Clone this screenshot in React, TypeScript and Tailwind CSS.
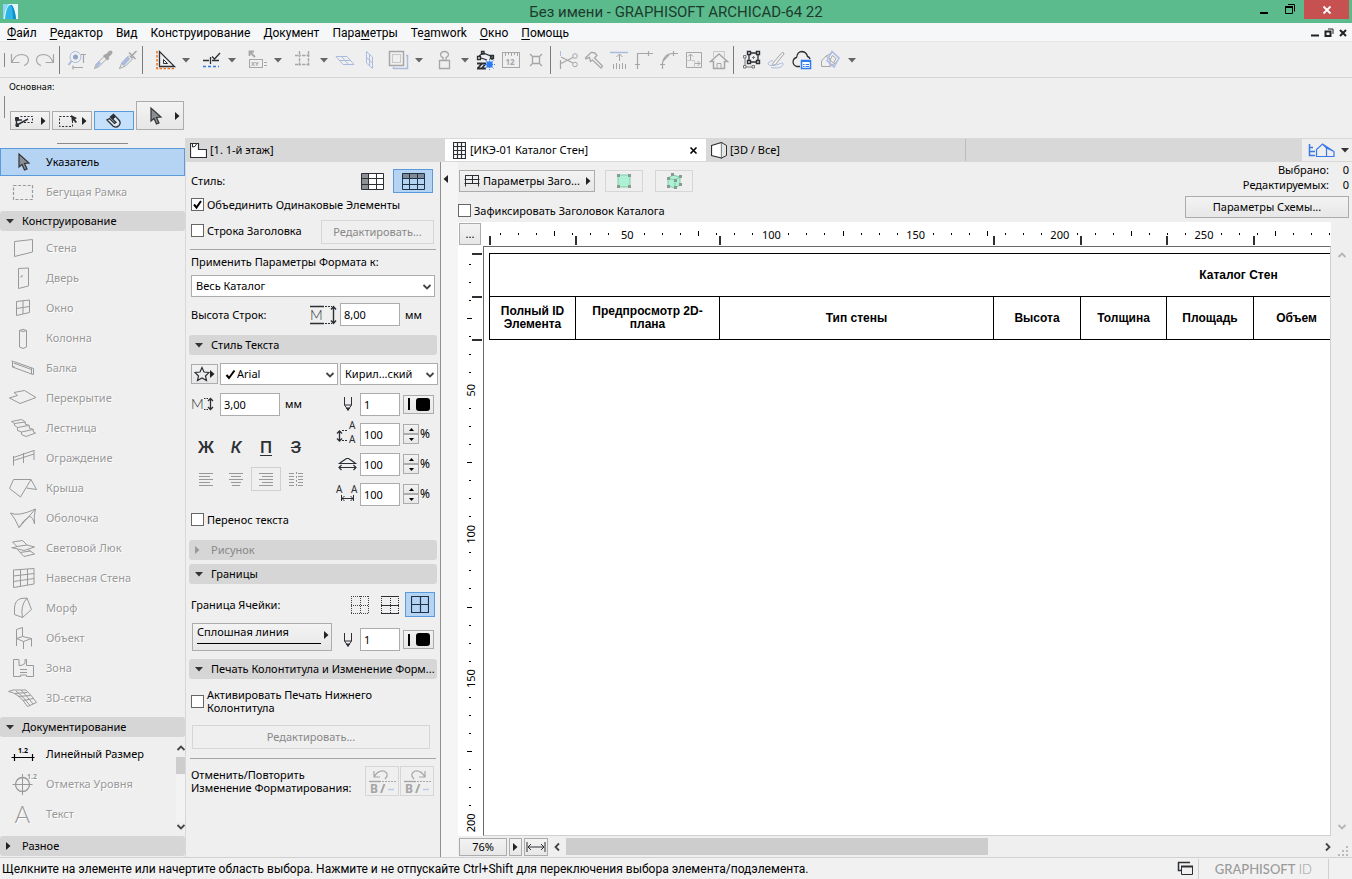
import React, { useEffect, useRef, useState } from 'react';

interface IconProps {
  w?: number;
  h?: number;
  className?: string;
  children: React.ReactNode;
}

const Icon: React.FC<IconProps> = ({ w = 24, h = 24, className = '', children }) => (
  <svg width={w} height={h} viewBox={`0 0 ${w} ${h}`} fill="none" stroke="currentColor" className={`shrink-0 ${className}`} aria-hidden="true">
    {children}
  </svg>
);

const Down = ({ className = 'text-[#555]' }: { className?: string }) => (
  <Icon w={8} h={5} className={className}><path d="M0 0H8L4 4.5Z" fill="currentColor" stroke="none" /></Icon>
);

const Right = ({ className = 'text-[#222]' }: { className?: string }) => (
  <Icon w={5} h={8} className={className}><path d="M0 0V8L4.5 4Z" fill="currentColor" stroke="none" /></Icon>
);

const Chevron = ({ d, className = 'text-[#444]' }: { d: string; className?: string }) => (
  <Icon w={10} h={10} className={className}><path d={d} strokeWidth={1.8} /></Icon>
);

const CHEVRON = {
  up: 'M1.5 7L5 3.5L8.5 7',
  down: 'M1.5 3L5 6.5L8.5 3',
  left: 'M7 1.5L3.5 5L7 8.5',
  right: 'M3 1.5L6.5 5L3 8.5',
};

const Cursor = () => (
  <Icon w={14} h={20} className="text-[#333]">
    <path d="M2 2V15L5 12.5L7.5 18L10 17L7.5 11.5L12 11Z" fill="#8a8f96" strokeWidth={1.2} />
  </Icon>
);

/* ---------- Menu ---------- */

const menu: [string, string, string][] = [
  ['', 'Ф', 'айл'],
  ['', 'Р', 'едактор'],
  ['Вид', '', ''],
  ['Конструирование', '', ''],
  ['Документ', '', ''],
  ['Пара', 'м', 'етры'],
  ['Te', 'a', 'mwork'],
  ['', 'О', 'кно'],
  ['', 'П', 'омощь'],
];

const TitleBar = () => (
  <header className="relative flex h-[23px] shrink-0 items-center justify-center bg-[#5bbb8d] font-['Roboto','Noto_Sans',sans-serif] text-[#1d3b2d]">
    <svg width={15} height={15} viewBox="0 0 15 15" className="absolute left-[3px] top-1" aria-hidden="true">
      <rect width={15} height={15} fill="#e9f7fc" />
      <path d="M0 15V0H6Q2 4 1 15Z" fill="#8bd6f0" />
      <path d="M2 15Q3 4 6 1.500Q8 0 9.500 2Q12 6 13 15Z" fill="#2fb4e6" />
      <path d="M8 1Q9 1 9.500 2Q12 6 13 15H10Q10 6 8 1Z" fill="#0d8fc9" />
    </svg>
    <h1 className="text-[15px] leading-5">Без имени - GRAPHISOFT ARCHICAD-64 22</h1>
    <div className="absolute right-[3px] top-0 flex items-start">
      <button aria-label="Свернуть" className="flex h-[22px] w-[26px] items-center justify-center text-black">
        <Icon w={10} h={10}><path d="M1 7H9" strokeWidth={2} /></Icon>
      </button>
      <button aria-label="Развернуть" className="mr-px flex h-[18px] w-[26px] items-center justify-center text-black">
        <Icon w={12} h={12}><path d="M1.5 4.5H8.5V10.5H1.5Z" /><path d="M1 4H9" strokeWidth={2} /><path d="M4 1.5H10.5V8.5" /></Icon>
      </button>
      <button aria-label="Закрыть" className="flex h-[19px] w-[45px] items-center justify-center bg-[#c75050] text-white">
        <Icon w={10} h={10}><path d="M1.5 1.5L8.5 8.5M8.5 1.5L1.5 8.5" strokeWidth={1.8} /></Icon>
      </button>
    </div>
  </header>
);

const MenuBar = () => (
  <nav className="flex h-[19px] shrink-0 items-center border-b border-[#e4e4e4] bg-[#f6f7f9] pl-[7px] pt-0.5 font-['Roboto','Noto_Sans',sans-serif] text-[12px] leading-4 text-black">
    <div className="flex grow gap-[13px]">
      {menu.map(([a, u, b]) => (
        <a key={a + u + b} href="#" className="whitespace-nowrap">
          {a}<span className="underline underline-offset-2">{u}</span>{b}
        </a>
      ))}
    </div>
    <div className="flex items-center gap-1 pr-1 text-[#222]">
      <button aria-label="Свернуть окно"><Icon w={10} h={10}><path d="M1 7.5H9" strokeWidth={2} /></Icon></button>
      <button aria-label="Развернуть окно"><Icon w={10} h={10}><path d="M1.500 3.500H6.500V8H1.500Z" strokeWidth={2} /><path d="M4 1H9V6" /></Icon></button>
      <button aria-label="Закрыть окно"><Icon w={10} h={10}><path d="M2 2L8 8M8 2L2 8" strokeWidth={2} /></Icon></button>
    </div>
  </nav>
);

/* ---------- Toolbar ---------- */

const G = 'text-[#a6a6a6]';
const D = 'text-[#2c3035]';

interface ToolItem {
  kind: 'icon' | 'arrow' | 'sep';
  name?: string;
  cls?: string;
  art?: React.ReactNode;
}

const arrow: ToolItem = { kind: 'arrow' };

const toolbar: ToolItem[] = [
  { kind: 'icon', name: 'Отменить', cls: G, art: <path d="M3.500 6V14.500H11.500M4 14C6 9 10 6.500 13.500 6.500Q20.500 7 20.500 12Q20 16.500 16 17.500" strokeWidth={1.200} /> },
  { kind: 'icon', name: 'Повторить', cls: G, art: <path d="M20.500 6V14.500H12.500M20 14C18 9 14 6.500 10.500 6.500Q3.500 7 3.500 12Q4 16.500 8 17.500" strokeWidth={1.200} /> },
  { kind: 'sep', cls: 'mr-[5px]' },
  { kind: 'icon', name: 'Найти и выбрать', cls: G, art: <><circle cx={9.500} cy={9} r={5.500} stroke="#a9bcdf" /><circle cx={9.500} cy={9} r={2.500} fill="#8fa3c4" stroke="none" /><path d="M5.500 13L2.500 17" stroke="#a9bcdf" strokeWidth={2} /><path d="M15 6.500H20M17.500 6.500V15M7 19.500H17M7 17.500V21.500" strokeWidth={1.200} /></> },
  { kind: 'icon', name: 'Взять параметры', cls: G, art: <><path d="M13 7L17.500 11.500" strokeWidth={3} /><path d="M16 8L19.500 4.500" strokeWidth={4} strokeLinecap="round" /><path d="M13 8.500L5 16.500L3.500 20.500L7.500 19L15.500 11" /><path d="M9 14L5 18.500" stroke="#a9bcdf" strokeWidth={3} /></> },
  { kind: 'icon', name: 'Передать параметры', cls: G, art: <><path d="M13 4.500L19.500 11M16.500 7L20.500 3M14 8L16.500 10.500" strokeWidth={1.600} /><path d="M13 7.500L6 14.500L3.500 20.500L9.500 18L16.500 11" /><path d="M13 9.500L6.500 17" stroke="#a9bcdf" strokeWidth={3.500} /></> },
  { kind: 'sep', cls: 'mr-[10px]' },
  { kind: 'icon', name: 'Линейки', cls: D, art: <><path d="M5.500 3.500V18.500H20.500Z" strokeWidth={1.300} /><path d="M9.500 11.500V15.500H13.500Z" /><path d="M3 3V20.500H21" stroke="#e8741e" strokeDasharray="2.500 1.500" strokeWidth={1.500} /></> },
  arrow,
  { kind: 'icon', name: 'Направляющие', cls: `ml-[5px] ${D}`, art: <><path d="M3 12.500H9M10.500 9V16M12 12.500H19M12 8.500L14.500 11L20 5" strokeWidth={1.300} /><path d="M3 18.500H19" stroke="#3b78e7" strokeDasharray="3 2" strokeWidth={1.600} /></> },
  arrow,
  { kind: 'icon', name: 'Координаты', cls: `ml-[5px] ${G}`, art: <><path d="M9 9L3.500 3.500M3.500 8V3.500H8" strokeWidth={1.800} /><rect x={3.500} y={11.500} width={13} height={8} /><text x={5} y={18} fontSize={6} fontWeight={700} fill="currentColor" stroke="none">XY</text><path d="M18 14.500H21M18 17.500H21" /></> },
  arrow,
  { kind: 'icon', name: 'Сетка', cls: `ml-[5px] ${G}`, art: <path d="M3 7.500H21M3 16.500H21M7.500 3V21M16.500 3V21" strokeDasharray="3.500 1 1.500 1 3.500 1 3" strokeWidth={1.400} /> },
  arrow,
  { kind: 'icon', name: 'Плоскость', cls: 'text-[#a9bcdf]', art: <path d="M3 8.500H14L21 16.500H10ZM6.500 12.500H17.500M8.500 8.500L15.500 16.500" /> },
  { kind: 'icon', name: 'Вертикальная плоскость', cls: 'text-[#a9bcdf]', art: <path d="M8.500 3.500L14.500 9V20.500L8.500 15ZM11.500 6V18M8.500 9.500L14.500 15" /> },
  { kind: 'icon', name: 'Слои', cls: `ml-1 ${G}`, art: <><path d="M19 7.500H20.500V20.500H6.500V19" stroke="#a9bcdf" strokeWidth={1.500} /><rect x={2.500} y={3.500} width={14} height={14} strokeWidth={1.500} /><rect x={5.500} y={6.500} width={8} height={8} stroke="#c8c8c8" /></> },
  arrow,
  { kind: 'icon', name: 'Штамп', cls: `ml-[5px] ${G}`, art: <path d="M6.500 12.500H16.500V20.500H6.500ZM10 12.500V9.500Q7.500 8.500 7.500 6.500Q8 3.500 11.500 3.500Q15 3.500 15.500 6.500Q15.500 8.500 13 9.500V12.500" strokeWidth={1.300} /> },
  arrow,
  { kind: 'icon', name: 'Трассировка', cls: D, art: <><path d="M5 8L9 5L18 8.500V12" strokeWidth={1.300} /><path d="M3.500 8.500H6.500V11.500H3.500ZM7.500 3.500H10V6H7.500ZM16.500 7.500H19.500V10.500H16.500ZM7 10L13 12" strokeWidth={1.300} /><path d="M3 15.500H12M3 20.500H12M4 20L8 15.500M8 20L12 15.500" strokeWidth={1.800} /><path d="M11.500 12.500L19.500 20.500M19.500 12.500L11.500 20.500M15.500 11V22M10 16.500H21" stroke="#2f7bf0" strokeDasharray="1.500 1" /><rect x={12.500} y={13.500} width={6} height={6} fill="#2f7bf0" stroke="none" /></> },
  { kind: 'icon', name: 'Измерить', cls: G, art: <><rect x={3.500} y={4.500} width={17} height={15} /><path d="M6.500 4.500V8M9.500 4.500V7M12.500 4.500V8M15.500 4.500V7M18.500 4.500V8" /><text x={6.500} y={17} fontSize={8} fontWeight={700} fill="currentColor" stroke="none">12</text></> },
  { kind: 'icon', name: 'Разрыв', cls: G, art: <path d="M8.500 8.500H15.500V15.500H8.500ZM6 6L9 9M18 6L15 9M6 18L9 15M18 18L15 15" strokeWidth={1.300} /> },
  { kind: 'sep', cls: 'mr-[5px]' },
  { kind: 'icon', name: 'Отсечь', cls: G, art: <><path d="M3.500 3V8" stroke="#a9bcdf" /><path d="M3.500 12V21M4 9L16 15M4 15.500L16 9.500" strokeWidth={1.200} /><circle cx={18} cy={8} r={2.300} /><circle cx={18} cy={16.500} r={2.300} /></> },
  { kind: 'icon', name: 'Расщепить', cls: G, art: <path d="M3.500 10L9 4.500Q13 4 15 7.500L12.500 10L20.500 18L19 20L10.500 12L8.500 13.500L7.500 9.500L4 11Z" strokeWidth={1.300} /> },
  { kind: 'icon', name: 'Подогнать', cls: G, art: <><path d="M3 4.500H21" stroke="#a9bcdf" strokeWidth={1.500} /><path d="M12.500 6V13M9.500 9L12.500 6L15.500 9M6.500 16V21M9.500 15V21M12.500 16V21M15.500 15V21M18.500 16V21" /></> },
  { kind: 'icon', name: 'Пересечь', cls: G, art: <path d="M5.500 21V5.500H21M3 16.500H8M16.500 3V8" strokeWidth={1.200} /> },
  { kind: 'icon', name: 'Сопряжение', cls: G, art: <path d="M5.500 21V15Q7 6 15 5.500H21M3 16.500H8M16.500 3V8M6 13L12 7" strokeWidth={1.200} /> },
  { kind: 'icon', name: 'Изменить размер', cls: G, art: <><path d="M4.500 4.500H19.500V19.500H4.500ZM8.500 12V6M6 8.500L8.500 6L11 8.500M12 15.500H18M15.500 13L18 15.500L15.500 18" /><path d="M4.500 12.500H12.500V19.500" stroke="#c8c8c8" /></> },
  { kind: 'icon', name: 'Домой', cls: G, art: <><path d="M3.500 13.500L12 6L20.500 13.500H17.500V20.500H6.500V13.500Z" strokeWidth={1.500} /><path d="M10 20V15.500H14V20" /><path d="M6.500 9V3.500H17.500V9" stroke="#c8c8c8" /></> },
  { kind: 'sep', cls: 'mr-[5px]' },
  { kind: 'icon', name: 'Группировать', cls: D, art: <><path d="M9 5H18V14H9Z" strokeWidth={1.300} /><path d="M7.500 3.500H10.500V6.500H7.500ZM16.500 3.500H19.500V6.500H16.500ZM7.500 12.500H10.500V15.500H7.500ZM16.500 12.500H19.500V15.500H16.500Z" fill="#efefef" strokeWidth={1.400} /><path d="M5 10V17M6 19H12M3.500 7.500H6V10H3.500ZM3.500 17.500H6V20H3.500ZM12 17.500H14.500V20H12ZM13.500 8V11M12 9.500H15" stroke="#777" /></> },
  { kind: 'icon', name: 'Редактировать', cls: G, art: <><path d="M8 15L17 4.500Q19 4 19 6L10.500 16.500L7.500 17.500Z" /><path d="M8 12.500C1 14 2 18 8 17.500S19 13 18 16.500S11 20.500 6 19.500" stroke="#a9bcdf" /></> },
  { kind: 'icon', name: 'BIMcloud', cls: D, art: <><path d="M10 18.500H7Q3.500 18 3 14Q3.500 10 6.500 9.500Q7.500 3.500 12 3.500Q16.500 4 17.500 8.500Q19.500 9 20 11" strokeWidth={1.300} /><rect x={11.500} y={12.500} width={9} height={8} fill="#fff" stroke="#2f7bf0" strokeWidth={1.500} /><path d="M11 13.500H21M13 16.500H14.500M15.500 16.500H19M13 18.500H14.500M15.500 18.500H19" stroke="#2f7bf0" /></> },
  { kind: 'icon', name: '3D-вид', cls: `ml-[3px] ${G}`, art: <><path d="M3.500 13L8 8L12 11V18.500H3.500ZM8 8L14 5M12 18.500L19 14" /><path d="M14 3.500L21 10L16 19L9 12.500Z" stroke="#a9b9ea" strokeWidth={1.500} /><path d="M14.500 7.500L18 10.500L15.500 15L12 12Z" /></> },
  { kind: 'arrow', cls: 'ml-0.5' },
];

const Toolbar = () => (
  <div className="flex h-9 shrink-0 items-center border-b border-[#d4d4d4] pl-1 pt-px" role="toolbar">
    <span className="mr-0.5 h-[14px] w-px bg-[#888]" />
    {toolbar.map((t, i) => {
      if (t.kind === 'sep') return <span key={i} className={`ml-0.5 h-7 w-px bg-[#7c7c7c] ${t.cls}`} />;
      if (t.kind === 'arrow') return <button key={i} aria-label="Ещё" className={`flex h-6 w-4 items-center justify-center ${t.cls ?? ''}`}><Down className="text-[#666]" /></button>;
      return (
        <button key={i} aria-label={t.name} className={`flex h-6 w-[25px] items-center justify-end ${t.cls}`}>
          <Icon>{t.art}</Icon>
        </button>
      );
    })}
  </div>
);

const boxBtn = 'flex items-center justify-center border border-[#acacac] bg-linear-to-b from-[#f3f3f3] to-[#e7e7e7]';

const InfoBox = () => (
  <div className="flex h-[60px] shrink-0 flex-col pl-1">
    <p className="mt-[3px] pl-[5px] text-[9px] leading-3 text-black">Основная:</p>
    <div className="mt-[3px] flex items-end gap-0.5">
      <span className="mb-3 mr-[3px] h-[22px] w-px bg-[#888]" />
      <button aria-label="Способ выбора" className={`${boxBtn} h-[19px] w-10 gap-2`}>
        <Icon w={18} h={14} className="text-[#2c3035]"><path d="M5.500 2.500H17.500V8.500H7" strokeDasharray="2 1.500" /><path d="M1.500 4.500V12M2 11L13 5M3 6H7" strokeWidth={1.500} /><path d="M.5 3.500H3.500V6.500H.5ZM1 10H3.500V12.500H1Z" fill="currentColor" /></Icon>
        <Right />
      </button>
      <button aria-label="Рамка выбора" className={`${boxBtn} h-[19px] w-10 gap-1`}>
        <Icon w={20} h={14} className="text-[#2c3035]"><path d="M1.500 2.500H14.500V12.500H1.500Z" strokeDasharray="2 1.500" /><path d="M13 1L19 4L17 5.500L19 8L17.500 9L15.500 6.500L14 8Z" fill="currentColor" stroke="none" /></Icon>
        <Right />
      </button>
      <button aria-label="Магнит" className="flex h-[19px] w-10 items-center justify-center border border-[#5a9bdc] bg-[#c4e0fa]">
        <Icon w={18} h={16} className="text-[#2c3035]"><path d="M2 7L8 13Q11 15.500 14 12.500Q16.500 9.500 13.500 6.500L8.500 1.500L5.500 4L11 9.500L9.500 10.500L4.500 5.500Z" fill="#dfe9f2" strokeWidth={1.300} /><path d="M8.500 1.500L5.500 4L8 6L10.500 3.500Z" fill="currentColor" /></Icon>
      </button>
      <button aria-label="Указатель" className={`${boxBtn} h-[29px] w-12 gap-3 pl-2`}>
        <Cursor />
        <Right />
      </button>
    </div>
  </div>
);

/* ---------- Toolbox ---------- */

const design: [string, React.ReactNode][] = [
  ['Стена', <path d="M5.500 5.500L23.500 3.500V16L5.500 20.500Z" />],
  ['Дверь', <path d="M9.500 2.500L19.500 2V20L9.500 22.500ZM12 11.500V10H14" />],
  ['Окно', <path d="M7.500 5.500L20.500 4V16.500L7.500 19.500ZM14 4.500V18M7.500 12.500L20.500 10.500" />],
  ['Колонна', <path d="M10.500 4.500V21Q14 24 17.500 21V4.500Q14 2 10.500 4.500Q14 6.500 17.500 4.500" />],
  ['Балка', <path d="M2.500 5L4.500 5.500L24.500 12.500V18.500L22.500 18L3.500 11V5.500M22.500 12V18M3.500 11L5.500 10.500M4.500 7L22.500 13.500" />],
  ['Перекрытие', <path d="M.5 12L8.500 9.500L5 6.500L15.500 4.500L27 11.500L11 17.500Z" />],
  ['Лестница', <path d="M2.500 5.500L12.500 3.500L16.500 6L16 8L20.500 9.500L20 12L24.500 13.500L24 15.500L26.500 17L17 20.500L12.500 18.500V16L8.500 14.500V11.500L5.500 9.500V7.500ZM5.500 7.500L16 6M8.500 11.500L19.500 9.500M12.500 16L24 13.500" />],
  ['Ограждение', <path d="M4.500 10V19.500M14.500 7V17M25 4V14M4.500 11.500L25 4.500M4.500 14.500L25 8" />],
  ['Крыша', <path d="M.5 12.500L4.500 3.500H22L11.500 21ZM22 3.500L27.500 13.500L17.500 12" />],
  ['Оболочка', <path d="M1.500 7Q9 11 26.500 3Q24.500 10 25.500 18Q24 11 20.500 10.500Q14 14 10 21.500Q6 12 1.500 7ZM26.500 3L10 21.500" />],
  ['Световой Люк', <path d="M3.500 6L13.500 4.500L18 9L8 10.500ZM3.500 12L8 10.500M18 9L25.500 11L15 14.500L2.500 11.500M8.500 13.500L15 20.500L25.500 18L19 13.500M11 16.500L21.500 15" />],
  ['Навесная Стена', <path d="M4.500 4L25 2.500V18L4.500 21.500ZM11.500 3.500V20.500M18.500 3V19M4.500 10L25 7.500M4.500 15.500L25 12.500" />],
  ['Морф', <path d="M5.500 12Q6 4 12 2.500L18 2L22.500 13.500L13.500 21.500L5.500 18.500ZM18 2Q11 10 13.500 21.500" />],
  ['Объект', <path d="M7.500 20V3.500L13.500 1.500V10.500L7.500 12.500L14.500 15.500L22.500 12.500V20.500M13.500 10.500L22.500 12.500M14.500 15.500V23" />],
  ['Зона', <path d="M9.500 3.500H4.500V20.500H11.500V19H17.500V20.500H24.500V9.500H17.500V3.500H16V7.500L12 9.500H10V3.500ZM11 13.500H18M11 16.500H18" />],
  ['3D-сетка', <path d="M-.5 5.500L4 4H17Q23 10 27.500 16.500L18.500 20.500Q10 7 -.5 5.500ZM7 5Q14 10 21 19.500M12 4Q18 10 24 18M5 7.500L18 6.500M9 10.500L21.500 9.500M14 14.500L24.500 12.500" />],
];

const doc: [string, React.ReactNode, boolean][] = [
  ['Линейный Размер', <><path d="M2.500 15.500H25.500M5.500 12V19M23.500 12V19" strokeWidth={1.200} /><text x={9} y={11} fontSize={7} fontWeight={700} fill="currentColor" stroke="none">1.2</text></>, true],
  ['Отметка Уровня', <><circle cx={13.500} cy={12.500} r={7} strokeWidth={1.300} /><path d="M3.500 12.500H23.500M13.500 2V23" /><text x={18} y={7} fontSize={7} fontWeight={700} fill="currentColor" stroke="none">1.2</text></>, false],
  ['Текст', <text x={5.500} y={21} fontSize={24} fontWeight={300} fontFamily="Lato, sans-serif" fill="currentColor" stroke="none">A</text>, false],
];

const ToolRow = ({ label, art, active = false }: { label: string; art: React.ReactNode; active?: boolean }) => (
  <button className={`flex h-[30px] w-full items-center gap-[9px] pl-[9px] text-left ${active ? 'text-black' : 'text-[#999] text-shadow-[1px_1px_0_#fff]'}`}>
    <Icon w={28} className="overflow-visible">{art}</Icon>
    <span>{label}</span>
  </button>
);

const ToolHeader = ({ label, open = true }: { label: string; open?: boolean }) => (
  <button className="flex h-5 w-full shrink-0 items-center rounded-[3px] bg-[#d6d6d6] pl-[6px] text-left text-black">
    <span className="flex w-4 shrink-0">{open ? <Down className="text-[#333]" /> : <Right />}</span>
    <span>{label}</span>
  </button>
);

const Toolbox = () => (
  <aside className="flex w-[186px] shrink-0 flex-col overflow-hidden border-r border-[#d8d8d8] pb-px">
    <span className="mx-auto mb-1 mt-[5px] h-px w-[71px] shrink-0 bg-[#8a8a8a]" />
    <button className="flex h-7 shrink-0 items-center gap-[15px] border border-[#5a9bdc] bg-[#b5d4f4] pl-4 text-left text-black">
      <Cursor />
      <span>Указатель</span>
    </button>
    <div className="mb-1 mt-px">
      <ToolRow label="Бегущая Рамка" art={<path d="M4.500 5.500H23.500V19.500H4.500Z" strokeDasharray="3 1.700" strokeWidth={1.200} />} />
    </div>
    <ToolHeader label="Конструирование" />
    <div className="mb-1 mt-0.5">
      {design.map(([label, art]) => <ToolRow key={label} label={label} art={art} />)}
    </div>
    <ToolHeader label="Документирование" />
    <div className="mt-0.5 flex min-h-0 grow">
      <div className="grow">
        {doc.map(([label, art, active]) => <ToolRow key={label} label={label} art={art} active={active} />)}
      </div>
      <div className="mb-1 flex w-[9px] shrink-0 flex-col items-center overflow-hidden pt-1">
        <Chevron d={CHEVRON.up} />
        <span className="mt-1 h-[17px] w-full bg-[#cdcdcd]" />
        <span className="w-full grow bg-[#f3f3f3]" />
        <Chevron d={CHEVRON.down} />
      </div>
    </div>
    <ToolHeader label="Разное" open={false} />
  </aside>
);

/* ---------- Format panel ---------- */

const Check = ({ label, checked = false }: { label: React.ReactNode; checked?: boolean }) => {
  const [on, setOn] = useState(checked);
  return (
    <label className="flex items-center gap-[3px] leading-[13px]">
      <span className="relative flex shrink-0">
        <input type="checkbox" checked={on} onChange={() => setOn(!on)} className="h-[13px] w-[13px] appearance-none border border-[#666] bg-white" />
        {on && <Icon w={13} h={13} className="pointer-events-none absolute inset-0 text-black"><path d="M3 6.500L5.500 9.500L10 3" strokeWidth={2} /></Icon>}
      </span>
      <span>{label}</span>
    </label>
  );
};

const Section = ({ label, open = true, disabled = false }: { label: string; open?: boolean; disabled?: boolean }) => (
  <button disabled={disabled} className={`mx-[3px] flex h-5 shrink-0 items-center whitespace-nowrap rounded-[3px] bg-[#d6d6d6] pl-[6px] text-left ${disabled ? 'text-[#888]' : 'text-black'}`}>
    <span className="flex w-4 shrink-0">{open ? <Down className="text-[#333]" /> : <Right className="text-[#999]" />}</span>
    <span>{label}</span>
  </button>
);

const Select = ({ label, value, className, pad = 'pl-1' }: { label: string; value: string; className: string; pad?: string }) => (
  <div className={`relative flex ${className}`}>
    <select aria-label={label} className={`h-[22px] w-full appearance-none border border-[#acacac] bg-white ${pad}`}>
      <option>{value}</option>
    </select>
    <Chevron d={CHEVRON.down} className="pointer-events-none absolute right-[3px] top-[7px] text-[#444]" />
  </div>
);

const Field = ({ label, value, className }: { label: string; value: string; className: string }) => (
  <input type="text" aria-label={label} defaultValue={value} className={`h-[23px] shrink-0 border border-[#acacac] bg-white pl-[3px] ${className}`} />
);

const Pen = () => (
  <Icon w={10} h={16} className="mr-[7px] text-[#2c3035]"><path d="M1.500 1V9L5 14L8.500 9V1M1.500 9H8.500" /><path d="M5 14.500L3.500 12H6.500Z" fill="currentColor" /></Icon>
);

const PenColor = () => (
  <button aria-label="Цвет пера" className={`${boxBtn} ml-[3px] h-[19px] w-[31px] gap-[6px]`}>
    <span className="h-3 w-0.5 bg-black" />
    <span className="h-[13px] w-[14px] rounded-[3px] bg-black" />
  </button>
);

const Percent = ({ label, art }: { label: string; art: React.ReactNode }) => (
  <div className="flex h-[30px] items-center">
    <Icon w={22} h={20} className="mr-0.5 overflow-visible text-[#2c3035]">{art}</Icon>
    <Field label={label} value="100" className="w-10" />
    <span className="ml-[3px] flex w-4 flex-col">
      <button aria-label="Больше" className={`${boxBtn} h-[10px]`}><Icon w={5} h={3}><path d="M0 3H5L2.500 0Z" fill="#000" stroke="none" /></Icon></button>
      <button aria-label="Меньше" className={`${boxBtn} h-[10px]`}><Icon w={5} h={3}><path d="M0 0H5L2.500 3Z" fill="#000" stroke="none" /></Icon></button>
    </span>
    <span className="ml-px text-[12px]">%</span>
  </div>
);

const glyphA = (x: number, y: number) => (
  <text x={x} y={y} fontSize={10} fill="currentColor" stroke="none">A</text>
);

const glyphM = (
  <text x={0} y={15} fontSize={14} fontWeight={300} fontFamily="Lato, sans-serif" fill="currentColor" stroke="none">M</text>
);

const styleBtn = "flex h-8 w-[30px] items-center justify-center font-['Roboto','Noto_Sans',sans-serif] text-[17px] font-medium text-[#2c3035]";
const alignBtn = 'flex h-6 w-[30px] items-center justify-center text-[#999]';
const disabledBtn = 'flex items-center justify-center border border-[#d6d6d6] text-[#888]';
const line = 'mx-1 h-px shrink-0 bg-[#a5a5a5]';

const FormatPanel = () => (
  <section className="flex w-[255px] shrink-0 flex-col overflow-hidden border-r border-[#8f8f8f] text-black">
    <div className="ml-[5px] mr-[7px] mt-[7px] flex items-center">
      <span className="grow">Стиль:</span>
      <button aria-label="Вертикальный" className="mr-[9px]">
        <Icon w={23} h={17} className="text-[#2c3035]"><path d="M1 1H8V16H1Z" fill="#8d9196" stroke="none" /><path d="M8 1H22V16H8Z" fill="#fff" stroke="none" /><path d="M.5 .5H22.500V16.500H.5ZM.5 5.500H22.500M.5 11.500H22.500M7.500 .5V16.500M15.500 .5V16.500" /></Icon>
      </button>
      <button aria-label="Горизонтальный" className="flex h-6 w-10 items-center justify-center border border-[#5a9bdc] bg-[#b5d4f4]">
        <Icon w={23} h={17} className="text-[#1f3348]"><path d="M1 1H22V5H1Z" fill="#7f8a96" stroke="none" /><path d="M.5 .5H22.500V16.500H.5ZM.5 5.500H22.500M.5 11.500H22.500M7.500 .5V16.500M15.500 .5V16.500" /></Icon>
      </button>
    </div>
    <div className="ml-[5px] mt-[5px]"><Check label="Объединить Одинаковые Элементы" checked /></div>
    <div className="ml-[5px] mr-[6px] mt-[9px] flex items-start justify-between">
      <div className="mt-1"><Check label="Строка Заголовка" /></div>
      <button disabled className={`${disabledBtn} h-6 w-[113px]`}>Редактировать...</button>
    </div>
    <div className={`${line} mt-[5px]`} />
    <p className="ml-[5px] mt-1 leading-4">Применить Параметры Формата к:</p>
    <Select label="Применить к" value="Весь Каталог" className="mx-[5px] mt-[5px]" />
    <div className="ml-[5px] mt-[6px] flex items-center">
      <span className="w-[119px]">Высота Строк:</span>
      <Icon w={27} h={20} className="mr-[3px] text-[#2c3035]">
        <path d="M0 1.500H14M0 18.500H14" strokeWidth={1.300} />
        <path d="M15 1.500H22M15 18.500H22" strokeDasharray="2 1" />
        <path d="M23.500 2V18M21 4.500L23.500 1.500L26 4.500M21 15.500L23.500 18.500L26 15.500" strokeWidth={1.400} />
        {glyphM}
      </Icon>
      <Field label="Высота Строк" value="8,00" className="w-[60px]" />
      <span className="ml-[5px]">мм</span>
    </div>

    <div className="mt-[9px] flex flex-col"><Section label="Стиль Текста" /></div>
    <div className="ml-[5px] mr-0.5 mt-2 flex items-center gap-0.5">
      <button aria-label="Избранное" className={`${boxBtn} h-5 w-[27px]`}>
        <Icon w={16} h={16} className="text-[#2c3035]"><path d="M8 1.500L10 6L15 6.500L11.500 10L12.500 14.500L8 12L3.500 14.500L4.500 10L1 6.500L6 6Z" strokeWidth={1.200} /></Icon>
        <Right />
      </button>
      <div className="relative flex w-[118px]">
        <Select label="Шрифт" value="Arial" className="w-full" pad="pl-4" />
        <Icon w={11} h={11} className="pointer-events-none absolute left-[5px] top-[6px] text-black"><path d="M1.500 6L4 9L9.500 1.500" strokeWidth={2} /></Icon>
      </div>
      <Select label="Кодировка" value="Кирил...ский" className="w-[98px]" />
    </div>
    <div className="ml-[5px] mt-1 flex">
      <div className="w-[145px] shrink-0">
        <div className="flex h-[30px] items-center">
          <Icon w={23} h={20} className="mr-[6px] text-[#2c3035]">
            {glyphM}
            <path d="M13 4.500H18M13 15.500H18" strokeDasharray="1.500 1" />
            <path d="M19.500 5V15M17 7L19.500 4.500L22 7M17 13L19.500 15.500L22 13" strokeWidth={1.300} />
          </Icon>
          <Field label="Размер текста" value="3,00" className="w-[60px]" />
          <span className="ml-[5px]">мм</span>
        </div>
        <div className="mt-3 flex">
          <button className={styleBtn}>Ж</button>
          <button className={`${styleBtn} italic`}>К</button>
          <button className={`${styleBtn} underline underline-offset-2`}>П</button>
          <button className={`${styleBtn} line-through`}>З</button>
        </div>
        <div className="mt-1 flex">
          <button disabled aria-label="По левому краю" className={alignBtn}><Icon w={16} h={14}><path d="M1 1.500H15M1 4.500H12M1 7.500H15M1 10.500H12M1 13.500H15" /></Icon></button>
          <button disabled aria-label="По центру" className={alignBtn}><Icon w={16} h={14}><path d="M1 1.500H15M3 4.500H13M1 7.500H15M3 10.500H13M4 13.500H12" /></Icon></button>
          <button disabled aria-label="По правому краю" className={`${alignBtn} border border-[#d0d0d0]`}><Icon w={16} h={14}><path d="M1 1.500H15M4 4.500H15M1 7.500H15M4 10.500H15M1 13.500H15" /></Icon></button>
          <button disabled aria-label="По ширине" className={alignBtn}><Icon w={16} h={14}><path d="M1 1.500H6M1 4.500H6M1 7.500H6M1 10.500H6M1 13.500H6M10 1.500H15M10 4.500H15M10 7.500H15M10 10.500H15M10 13.500H15" /><path d="M8.500 0V14" strokeDasharray="2 2" /></Icon></button>
        </div>
      </div>
      <div>
        <div className="flex h-[30px] items-center pl-[7px]">
          <Pen />
          <Field label="Перо текста" value="1" className="w-10" />
          <PenColor />
        </div>
        <Percent label="Интерлиньяж" art={<><path d="M3.500 7V17M1 9.500L3.500 7L6 9.500M1 14.500L3.500 17L6 14.500" strokeWidth={1.300} /><path d="M6 6.500H12M6 16.500H12" strokeDasharray="2 1" />{glyphA(13, 5)}{glyphA(13, 19)}</>} />
        <Percent label="Ширина" art={<path d="M3.500 9.500H19.500L17 7.500L12.500 4.500H10.500L6 7.500ZM3 13.500H20M5.500 11L3 13.500L5.500 16M17.500 11L20 13.500L17.500 16" strokeWidth={1.200} />} />
        <Percent label="Межсимвольный интервал" art={<>{glyphA(0, 9)}{glyphA(15, 9)}<path d="M6 14.500H17M8.500 12L6 14.500L8.500 17M14.500 12L17 14.500L14.500 17M5.500 11V17M17.500 11V17" /></>} />
      </div>
    </div>
    <div className="ml-[5px] mt-1"><Check label="Перенос текста" /></div>

    <div className="mt-[14px] flex flex-col gap-1">
      <Section label="Рисунок" open={false} disabled />
      <Section label="Границы" />
    </div>
    <div className="ml-[5px] mr-[5px] mt-2 flex items-center">
      <span className="grow">Граница Ячейки:</span>
      <button aria-label="Без границ" className="mr-3 text-[#444]">
        <Icon w={18} h={18}><path d="M0 .5H18M0 9.500H18M0 17.500H18M.5 0V18M9.500 0V18M17.500 0V18" strokeDasharray="1 1" /></Icon>
      </button>
      <button aria-label="Горизонтальные границы" className="mr-[6px] text-[#2c3035]">
        <Icon w={18} h={18}><path d="M.5 0V18M17.500 0V18M9.500 0V18" strokeDasharray="1 1" /><path d="M0 .5H18M0 9.500H18M0 17.500H18" /></Icon>
      </button>
      <button aria-label="Все границы" className="flex h-[25px] w-[30px] items-center justify-center border border-[#5a9bdc] bg-[#b5d4f4] text-[#1f3348]">
        <Icon w={18} h={17}><path d="M.5 .5H17.500V16.500H.5ZM.5 8.500H17.500M9.500 .5V16.500" strokeWidth={1.200} /></Icon>
      </button>
    </div>
    <div className="ml-[6px] mt-[6px] flex items-end">
      <button className={`${boxBtn} h-7 w-[140px] gap-px pb-1 pl-1`}>
        <span className="grow border-b border-black pb-[5px] text-left leading-3">Сплошная линия</span>
        <span className="mx-0.5"><Right /></span>
      </button>
      <span className="ml-[11px] flex items-center">
        <Pen />
        <Field label="Перо границы" value="1" className="w-10" />
        <PenColor />
      </span>
    </div>
    <div className="mt-2 flex flex-col"><Section label="Печать Колонтитула и Изменение Форм..." /></div>
    <div className="ml-[5px] mt-[9px]"><Check label={<>Активировать Печать Нижнего<br />Колонтитула</>} /></div>
    <button disabled className={`${disabledBtn} ml-[6px] mr-[10px] mt-[11px] h-6 shrink-0`}>Редактировать...</button>
    <div className={`${line} mt-[9px]`} />
    <div className="ml-[5px] mr-[6px] mt-[7px] flex items-center gap-px">
      <span className="grow leading-[13px]">Отменить/Повторить<br />Изменение Форматирования:</span>
      {['M9 4V10H15M9 10Q13 3 19 4Q25 7 20 12', 'M25 4V10H19M25 10Q21 3 15 4Q9 7 14 12'].map((d, i) => (
        <button key={d} disabled aria-label={i ? 'Повторить форматирование' : 'Отменить форматирование'} className={`${disabledBtn} h-[30px] w-[34px]`}>
          <Icon w={32} h={28} className="overflow-visible text-[#a6a6a6]">
            <path d={d} transform="translate(-1 0)" strokeWidth={1.200} />
            <path d="M3 14.500H15" strokeWidth={1.400} /><path d="M16 14.500H30" strokeDasharray="2 1" />
            <text x={4} y={26} fontSize={12} fontWeight={700} fill="currentColor" stroke="none">B</text>
            <path d="M18.500 17L15 26" strokeWidth={2} /><path d="M22 22.500H28" stroke="#b9cbe6" strokeWidth={1.400} />
          </Icon>
        </button>
      ))}
    </div>
  </section>
);

/* ---------- Tabs ---------- */

const TabBar = () => (
  <div className="flex h-6 shrink-0 items-end bg-[#d8d8d8] pb-px pt-px text-black" role="tablist">
    <button role="tab" className="flex h-[22px] w-[260px] items-center gap-[3px] border-r border-white pl-1 text-left">
      <Icon w={17} h={17} className="text-[#2c3035]"><path d="M.5 1.500H8.500V7.500H16.500V15.500H.5Z" fill="#fff" strokeWidth={1.200} /><path d="M2.500 2V5L5 4.500L6.500 2" /></Icon>
      [1. 1-й этаж]
    </button>
    <div className="flex h-[22px] w-[260px] items-center bg-white pl-[7px] pr-2">
      <button role="tab" aria-selected="true" className="flex grow items-center gap-1 text-left">
        <Icon w={13} h={17} className="text-[#2c3035]"><path d="M.5 .5H12.500V16.500H.5ZM.5 4.500H12.500M.5 8.500H12.500M.5 12.500H12.500M4.500 .5V16.500M8.500 .5V16.500" strokeWidth={1.200} /></Icon>
        [ИКЭ-01 Каталог Стен]
      </button>
      <button aria-label="Закрыть вкладку"><Icon w={9} h={9} className="text-black"><path d="M1.500 1.500L7.500 7.500M7.500 1.500L1.500 7.500" strokeWidth={1.600} /></Icon></button>
    </div>
    <button role="tab" className="flex h-[22px] w-[260px] items-center gap-[3px] border-r border-[#bcbcbc] pl-[5px] text-left">
      <Icon w={16} h={17} className="text-[#2c3035]"><path d="M.5 3.500L10.500 .5V16L.5 13.500Z" fill="#fff" strokeWidth={1.200} /><path d="M10.500 .5L15.500 3.500V13.500L10.500 16" fill="#e6e6e6" /></Icon>
      [3D / Все]
    </button>
    <button aria-label="Навигатор" className="ml-auto flex h-[22px] items-center gap-[6px] bg-[#eee] pl-[6px] pr-[3px]">
      <Icon w={27} h={17} className="text-[#3b78e7]"><path d="M1.500 2V13.500H7M1.500 5.500H5M1.500 9.500H7M5 13.500H7" strokeWidth={1.500} /><path d="M8.500 14.500V7.500L14.500 2L18.500 6V14.500ZM14.500 2L26 9.500V14.500H18.500M18.500 6L26 9.500" strokeWidth={1.200} /></Icon>
      <Down className="text-[#333]" />
    </button>
  </div>
);

/* ---------- Schedule view ---------- */

const UNIT = 144.2;
const columnTicks = [8, 94, 238, 512, 599, 685, 772];
const rowTicks = [8, 51, 94];

const useSize = () => {
  const ref = useRef<SVGSVGElement>(null);
  const [size, setSize] = useState({ width: 0, height: 0 });

  useEffect(() => {
    if (!ref.current) return;
    const observer = new ResizeObserver(([entry]) => {
      setSize({ width: entry.contentRect.width, height: entry.contentRect.height });
    });
    observer.observe(ref.current);
    return () => observer.disconnect();
  }, []);

  return { ref, size };
};

// Eight small steps between two numbers, labels only where they fit whole
const scale = (length: number) => ({
  marks: Array.from({ length: Math.max(0, Math.floor((length - 12) / UNIT)) }, (_, i) => i + 1),
  steps: Array.from({ length: Math.floor((length * 8) / UNIT) }, (_, i) => i + 1).filter(i => i % 8 !== 0),
});

const TopRuler = () => {
  const { ref, size } = useSize();
  const { marks, steps } = scale(size.width);
  return (
    <svg ref={ref} className="h-6 min-w-0 grow text-black" aria-hidden="true">
      {steps.map(i => <rect key={i} x={Math.round(i * UNIT / 8)} y={i % 8 === 4 ? 9 : 11} width={1} height={i % 8 === 4 ? 5 : 2} fill="currentColor" />)}
      {marks.map(i => <text key={i} x={i * UNIT + 1} y={17} fontSize={11} textAnchor="middle" fill="currentColor">{i * 50}</text>)}
      {columnTicks.map(x => <rect key={x} x={x - 1} y={14} width={2} height={9} fill="#2c3035" />)}
    </svg>
  );
};

const LeftRuler = () => {
  const { ref, size } = useSize();
  const { marks, steps } = scale(size.height);
  return (
    <svg ref={ref} className="h-full w-[25px] shrink-0 bg-white text-black" aria-hidden="true">
      {steps.map(i => <rect key={i} x={i % 8 === 4 ? 9 : 11} y={Math.round(i * UNIT / 8)} width={i % 8 === 4 ? 5 : 2} height={1} fill="currentColor" />)}
      {marks.map(i => (
        <text key={i} transform={`translate(17 ${i * UNIT}) rotate(-90)`} fontSize={11} textAnchor="middle" fill="currentColor">{i * 50}</text>
      ))}
      {rowTicks.map(y => <rect key={y} x={14} y={y - 1} width={10} height={2} fill="#2c3035" />)}
    </svg>
  );
};

const headCell = 'border border-black px-1 align-middle';

const Schedule = () => (
  <table className="ml-[5px] mt-[6px] w-[1499px] table-fixed border-collapse font-['Liberation_Sans',Arial,sans-serif] text-[12px] font-bold leading-[13px] text-black">
    <colgroup>
      <col className="w-[86px]" />
      <col className="w-[144px]" />
      <col className="w-[274px]" />
      <col className="w-[87px]" />
      <col className="w-[86px]" />
      <col className="w-[87px]" />
      <col className="w-[86px]" />
      <col />
    </colgroup>
    <thead>
      <tr className="h-[43px]"><th colSpan={8} className={headCell}>Каталог Стен</th></tr>
      <tr className="h-[43px]">
        <th className={headCell}>Полный ID Элемента</th>
        <th className={headCell}>Предпросмотр 2D-<br />плана</th>
        <th className={headCell}>Тип стены</th>
        <th className={headCell}>Высота</th>
        <th className={headCell}>Толщина</th>
        <th className={headCell}>Площадь</th>
        <th className={headCell}>Объем</th>
        <th className={headCell} />
      </tr>
    </thead>
  </table>
);

const ScheduleView = () => (
  <main className="flex min-w-0 grow flex-col text-black">
    <div className="flex h-[60px] shrink-0 justify-between">
      <div className="pl-px pt-2">
        <div className="flex">
          <button className={`${boxBtn} h-[22px] w-[136px] justify-start pl-1`}>
            <Icon w={16} h={12} className="mr-[3px] text-[#2c3035]"><path d="M1 .5H15M.5 4.500H15.500M.5 8.500H15.500M1.500 .5V11.500M14.500 .5V11.500M8.500 .5V8.500" /></Icon>
            <span className="grow truncate text-left">Параметры Заго...</span>
            <span className="mr-[3px]"><Right /></span>
          </button>
          <button disabled aria-label="Показать на плане" className={`${disabledBtn} ml-[10px] h-[22px] w-[38px]`}>
            <Icon w={16} h={16}><path d="M2 2H14V14H2Z" fill="#aef0d3" stroke="#7fcfae" /><path d="M1 1H4V4H1ZM12 1H15V4H12ZM1 12H4V15H1ZM12 12H15V15H12Z" fill="#8a9a93" stroke="none" /></Icon>
          </button>
          <button disabled aria-label="Показать в 3D" className={`${disabledBtn} ml-3 h-[22px] w-[38px]`}>
            <Icon w={16} h={16}><path d="M2 5L7 2L14 4V12L9 15L2 13Z" fill="#aef0d3" stroke="#7fcfae" /><path d="M2 5L9 7L14 4M9 7V15" stroke="#7fcfae" /><path d="M1 4H4V7H1ZM5 0H8V3H5ZM13 2H16V5H13ZM8 6H11V9H8ZM1 12H4V15H1ZM8 13H11V16H8ZM13 10H16V13H13Z" fill="#8a9a93" stroke="none" /></Icon>
          </button>
        </div>
        <div className="-ml-px mt-3"><Check label="Зафиксировать Заголовок Каталога" /></div>
      </div>
      <div className="flex flex-col items-end pr-[3px]">
        <dl className="grid grid-cols-[auto_20px] text-right leading-[15px]">
          <dt>Выбрано:</dt><dd>0</dd>
          <dt>Редактируемых:</dt><dd>0</dd>
        </dl>
        <button className={`${boxBtn} mt-1 h-[22px] w-[164px]`}>Параметры Схемы...</button>
      </div>
    </div>
    <div className="mr-[21px] flex h-6 shrink-0 bg-white">
      <button aria-label="Параметры линейки" className={`${boxBtn} ml-px mt-px h-[22px] w-[22px] shrink-0`}>...</button>
      <span className="w-px shrink-0" />
      <TopRuler />
    </div>
    <div className="flex min-h-0 grow">
      <LeftRuler />
      <div className="min-w-0 grow overflow-hidden border border-b-[#d0d0d0] border-l-[#6b6b6b] border-r-[#d0d0d0] border-t-[#6b6b6b] bg-white">
        <Schedule />
      </div>
      <div className="flex w-[21px] shrink-0 flex-col items-center justify-between py-1">
        <Chevron d={CHEVRON.up} className="text-[#b5b5b5]" />
        <Chevron d={CHEVRON.down} className="text-[#b5b5b5]" />
      </div>
    </div>
    <div className="flex h-[21px] shrink-0 items-center pl-px">
      <button className={`${boxBtn} h-[18px] w-12`}>76%</button>
      <button aria-label="Масштаб" className={`${boxBtn} ml-0.5 h-[18px] w-[13px]`}><Right /></button>
      <button aria-label="По ширине" className={`${boxBtn} ml-0.5 h-[18px] w-6`}>
        <Icon w={20} h={10} className="text-[#2c3035]"><path d="M1 0V10M19 0V10M2 5H18M5 2L2 5L5 8M15 2L18 5L15 8" /></Icon>
      </button>
      <div className="ml-1 flex grow items-center gap-1">
        <Chevron d={CHEVRON.left} />
        <div className="h-[17px] grow"><div className="h-full w-[56%] bg-[#cdcdcd]" /></div>
        <Chevron d={CHEVRON.right} />
      </div>
      <Icon w={12} h={12} className="ml-[5px] mr-0.5 self-end text-[#bbb]"><path d="M8 1H10V3H8ZM8 5H10V7H8ZM4 5H6V7H4ZM8 9H10V11H8ZM4 9H6V11H4ZM0 9H2V11H0Z" fill="currentColor" stroke="none" /></Icon>
    </div>
  </main>
);

const StatusBar = () => (
  <footer className="flex h-[22px] shrink-0 items-center border-t border-[#d0d0d0] bg-[#f1f1f1] pl-0.5 font-['Roboto','Noto_Sans',sans-serif] text-[12px] text-black">
    <span className="min-w-0 grow truncate">
      Щелкните на элементе или начертите область выбора. Нажмите и не отпускайте Ctrl+Shift для переключения выбора элемента/подэлемента.
    </span>
    <Icon w={17} h={15} className="mr-1 text-[#2c3035]"><path d="M1 1.500H13M1.500 1V9.500H4" strokeWidth={1.500} /><path d="M4.500 5.500H15.500V13.500H4.500Z" /><path d="M4 5.500H16" strokeWidth={2} /></Icon>
    <a href="#" className="border-x border-[#d0d0d0] px-4 font-['Lato',sans-serif] text-[13px] leading-5 text-[#9a9a9a]">
      <span className="font-medium">GRAPHISOFT</span> <span className="font-light">ID</span>
    </a>
    <span className="w-[23px] shrink-0" />
  </footer>
);

export default function App() {
  return (
    <div className="flex h-screen flex-col overflow-hidden bg-[#efefef] font-['Noto_Sans','Open_Sans',sans-serif] text-[11px] leading-4">
      <TitleBar />
      <MenuBar />
      <Toolbar />
      <InfoBox />
      <div className="flex min-h-0 grow">
        <Toolbox />
        <div className="flex min-w-0 grow flex-col">
          <TabBar />
          <div className="flex min-h-0 grow">
            <FormatPanel />
            <div className="w-[17px] shrink-0 bg-[#f5f5f5] pl-0.5 pt-[13px]">
              <button aria-label="Свернуть панель" className="block">
                <Icon w={5} h={8} className="text-[#222]"><path d="M5 0V8L.5 4Z" fill="currentColor" stroke="none" /></Icon>
              </button>
            </div>
            <ScheduleView />
          </div>
        </div>
      </div>
      <StatusBar />
    </div>
  );
}
